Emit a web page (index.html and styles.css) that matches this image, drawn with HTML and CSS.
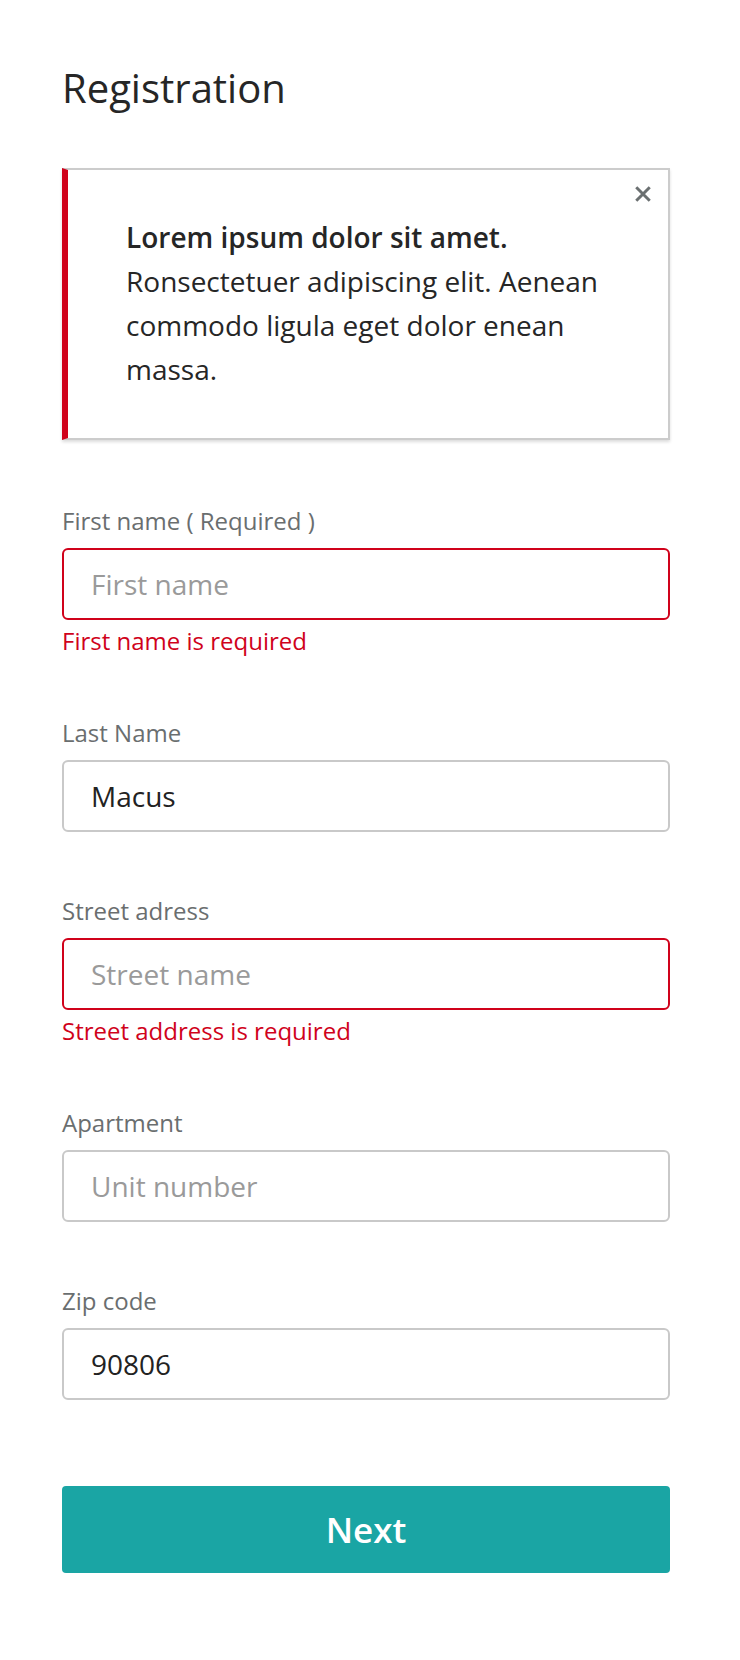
FILE: index.html
```html
<!DOCTYPE html>
<html lang="en">
<head>
<meta charset="utf-8">
<title>Registration</title>
<link rel="stylesheet" href="styles.css">
</head>
<body>
<main class="page">
  <h1 class="title">Registration</h1>

  <div class="alert" role="alert">
    <button class="alert-close" type="button" aria-label="Close">
      <svg viewBox="0 0 16 16" width="16" height="16"><path d="M2 2 L14 14 M14 2 L2 14" stroke="#6b7071" stroke-width="2.6" stroke-linecap="butt" fill="none"/></svg>
    </button>
    <p class="alert-text"><strong class="alert-strong">Lorem ipsum dolor sit amet.</strong>Ronsectetuer adipiscing elit. Aenean commodo ligula eget dolor enean massa.</p>
  </div>

  <form class="form">
    <div class="field">
      <label class="label" for="first">First name ( Required )</label>
      <input class="input input-error" id="first" type="text" placeholder="First name">
      <div class="error">First name is required</div>
    </div>

    <div class="field">
      <label class="label" for="last">Last Name</label>
      <input class="input" id="last" type="text" value="Macus">
    </div>

    <div class="field">
      <label class="label" for="street">Street adress</label>
      <input class="input input-error" id="street" type="text" placeholder="Street name">
      <div class="error">Street address is required</div>
    </div>

    <div class="field">
      <label class="label" for="apt">Apartment</label>
      <input class="input" id="apt" type="text" placeholder="Unit number">
    </div>

    <div class="field">
      <label class="label" for="zip">Zip code</label>
      <input class="input" id="zip" type="text" value="90806">
    </div>

    <button class="next" type="button">Next</button>
  </form>
</main>
</body>
</html>
```

FILE: styles.css
```css
* {
  box-sizing: border-box;
}

html, body {
  margin: 0;
  padding: 0;
  background: #ffffff;
}

body {
  font-family: "Open Sans", "Noto Sans", "Liberation Sans", sans-serif;
  color: #222222;
}

.page {
  width: 608px;
  margin-left: 62px;
  padding-top: 64px;
  padding-bottom: 40px;
}

.title {
  margin: 0;
  font-size: 40px;
  line-height: 48px;
  font-weight: 400;
  color: #262626;
}

.alert {
  position: relative;
  margin-top: 56px;
  border: 2px solid #cccccc;
  border-left: 6px solid #d0021b;
  box-shadow: 0 2px 3px rgba(0, 0, 0, 0.14);
  padding: 45px 58px 47px 58px;
  background: #ffffff;
}

.alert-close {
  position: absolute;
  top: 12px;
  right: 13px;
  width: 24px;
  height: 24px;
  padding: 0;
  border: 0;
  background: transparent;
  display: flex;
  align-items: center;
  justify-content: center;
}

.alert-close svg {
  width: 18px;
  height: 18px;
}

.alert-text {
  margin: 0;
  font-size: 28px;
  line-height: 44px;
  color: #262626;
}

.alert-strong {
  display: block;
  font-weight: 600;
}

.form {
  margin-top: 65px;
  display: flex;
  flex-direction: column;
}

.field {
  display: flex;
  flex-direction: column;
  margin-bottom: 63px;
}

.label {
  font-size: 24px;
  line-height: 32px;
  color: #6a6e6f;
  margin-bottom: 11px;
}

.input {
  width: 100%;
  height: 72px;
  border: 2px solid #c9c9c9;
  border-radius: 6px;
  padding: 0 27px;
  font-family: "Open Sans", "Noto Sans", "Liberation Sans", sans-serif;
  font-size: 28px;
  color: #222222;
  background: #ffffff;
  outline: none;
}

.input::placeholder {
  color: #9a9a9a;
  opacity: 1;
}

.input-error {
  border-color: #d0021b;
}

.error {
  margin-top: 7px;
  font-size: 24px;
  line-height: 27px;
  color: #d0021b;
}

.next {
  margin-top: 23px;
  width: 100%;
  height: 87px;
  border: 0;
  border-radius: 4px;
  background: #1aa5a4;
  color: #ffffff;
  font-family: "Open Sans", "Noto Sans", "Liberation Sans", sans-serif;
  font-size: 35px;
  font-weight: 600;
}
```
